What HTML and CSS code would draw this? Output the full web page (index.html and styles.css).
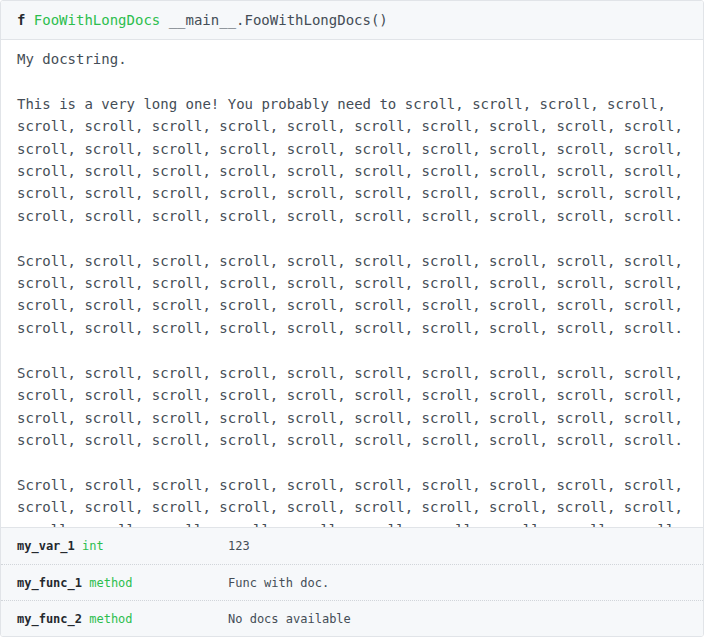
FILE: index.html
```html
<!DOCTYPE html>
<html>
<head>
<meta charset="utf-8">
<link rel="stylesheet" href="styles.css">
</head>
<body>
<div class="card">
  <div class="header"><span class="kw">f</span><span class="name">FooWithLongDocs</span><span class="sig">__main__.FooWithLongDocs()</span></div>
  <pre class="doc">My docstring.

This is a very long one! You probably need to scroll, scroll, scroll, scroll,
scroll, scroll, scroll, scroll, scroll, scroll, scroll, scroll, scroll, scroll,
scroll, scroll, scroll, scroll, scroll, scroll, scroll, scroll, scroll, scroll,
scroll, scroll, scroll, scroll, scroll, scroll, scroll, scroll, scroll, scroll,
scroll, scroll, scroll, scroll, scroll, scroll, scroll, scroll, scroll, scroll,
scroll, scroll, scroll, scroll, scroll, scroll, scroll, scroll, scroll, scroll.

Scroll, scroll, scroll, scroll, scroll, scroll, scroll, scroll, scroll, scroll,
scroll, scroll, scroll, scroll, scroll, scroll, scroll, scroll, scroll, scroll,
scroll, scroll, scroll, scroll, scroll, scroll, scroll, scroll, scroll, scroll,
scroll, scroll, scroll, scroll, scroll, scroll, scroll, scroll, scroll, scroll.

Scroll, scroll, scroll, scroll, scroll, scroll, scroll, scroll, scroll, scroll,
scroll, scroll, scroll, scroll, scroll, scroll, scroll, scroll, scroll, scroll,
scroll, scroll, scroll, scroll, scroll, scroll, scroll, scroll, scroll, scroll,
scroll, scroll, scroll, scroll, scroll, scroll, scroll, scroll, scroll, scroll.

Scroll, scroll, scroll, scroll, scroll, scroll, scroll, scroll, scroll, scroll,
scroll, scroll, scroll, scroll, scroll, scroll, scroll, scroll, scroll, scroll,
scroll, scroll, scroll, scroll, scroll, scroll, scroll, scroll, scroll, scroll,
scroll, scroll, scroll, scroll, scroll, scroll, scroll, scroll, scroll, scroll.</pre>
  <div class="members">
    <div class="row">
      <div class="cell key"><b>my_var_1</b><span class="type">int</span></div>
      <div class="cell val">123</div>
    </div>
    <div class="row">
      <div class="cell key"><b>my_func_1</b><span class="type">method</span></div>
      <div class="cell val">Func with doc.</div>
    </div>
    <div class="row">
      <div class="cell key"><b>my_func_2</b><span class="type">method</span></div>
      <div class="cell val">No docs available</div>
    </div>
  </div>
</div>
</body>
</html>
```
FILE: styles.css
```css
html, body {
  margin: 0;
  padding: 0;
  background: #ffffff;
}
body {
  font-family: "DejaVu Sans Mono", "Liberation Mono", monospace;
  color: #444d56;
}
.card {
  box-sizing: border-box;
  width: 704px;
  height: 637px;
  border: 1px solid #e1e4e8;
  border-radius: 3px;
  display: flex;
  flex-direction: column;
  overflow: hidden;
}
.header {
  flex: none;
  height: 39px;
  box-sizing: border-box;
  padding: 0 16px 1px;
  display: flex;
  align-items: center;
  gap: 8.4px;
  white-space: pre;
  background: #f6f8fa;
  border-bottom: 1px solid #e1e4e8;
  font-size: 14px;
  color: #444d56;
}
.header .kw {
  font-weight: bold;
  color: #24292e;
}
.header .name {
  color: #2cbe4e;
}
.doc {
  flex: 1;
  min-height: 0;
  margin: 0;
  padding: 8px 16px 0;
  overflow: hidden;
  font-family: "DejaVu Sans Mono", "Liberation Mono", monospace;
  font-size: 14px;
  line-height: 22.4px;
  color: #444d56;
  white-space: pre;
}
.members {
  flex: none;
  background: #f6f8fa;
  border-top: 1px solid #e1e4e8;
  font-size: 12px;
  line-height: 16px;
}
.row {
  display: grid;
  grid-template-columns: 211px 1fr;
  height: 35px;
  align-items: center;
}
.row:first-child {
  height: 36px;
}
.row + .row {
  border-top: 1px dotted #d1d5da;
}
.cell {
  padding: 0 16px;
}
.key {
  display: flex;
  gap: 7.2px;
}
.key b {
  color: #24292e;
  font-weight: bold;
}
.type {
  color: #2cbe4e;
}
.val {
  color: #444d56;
}
```
